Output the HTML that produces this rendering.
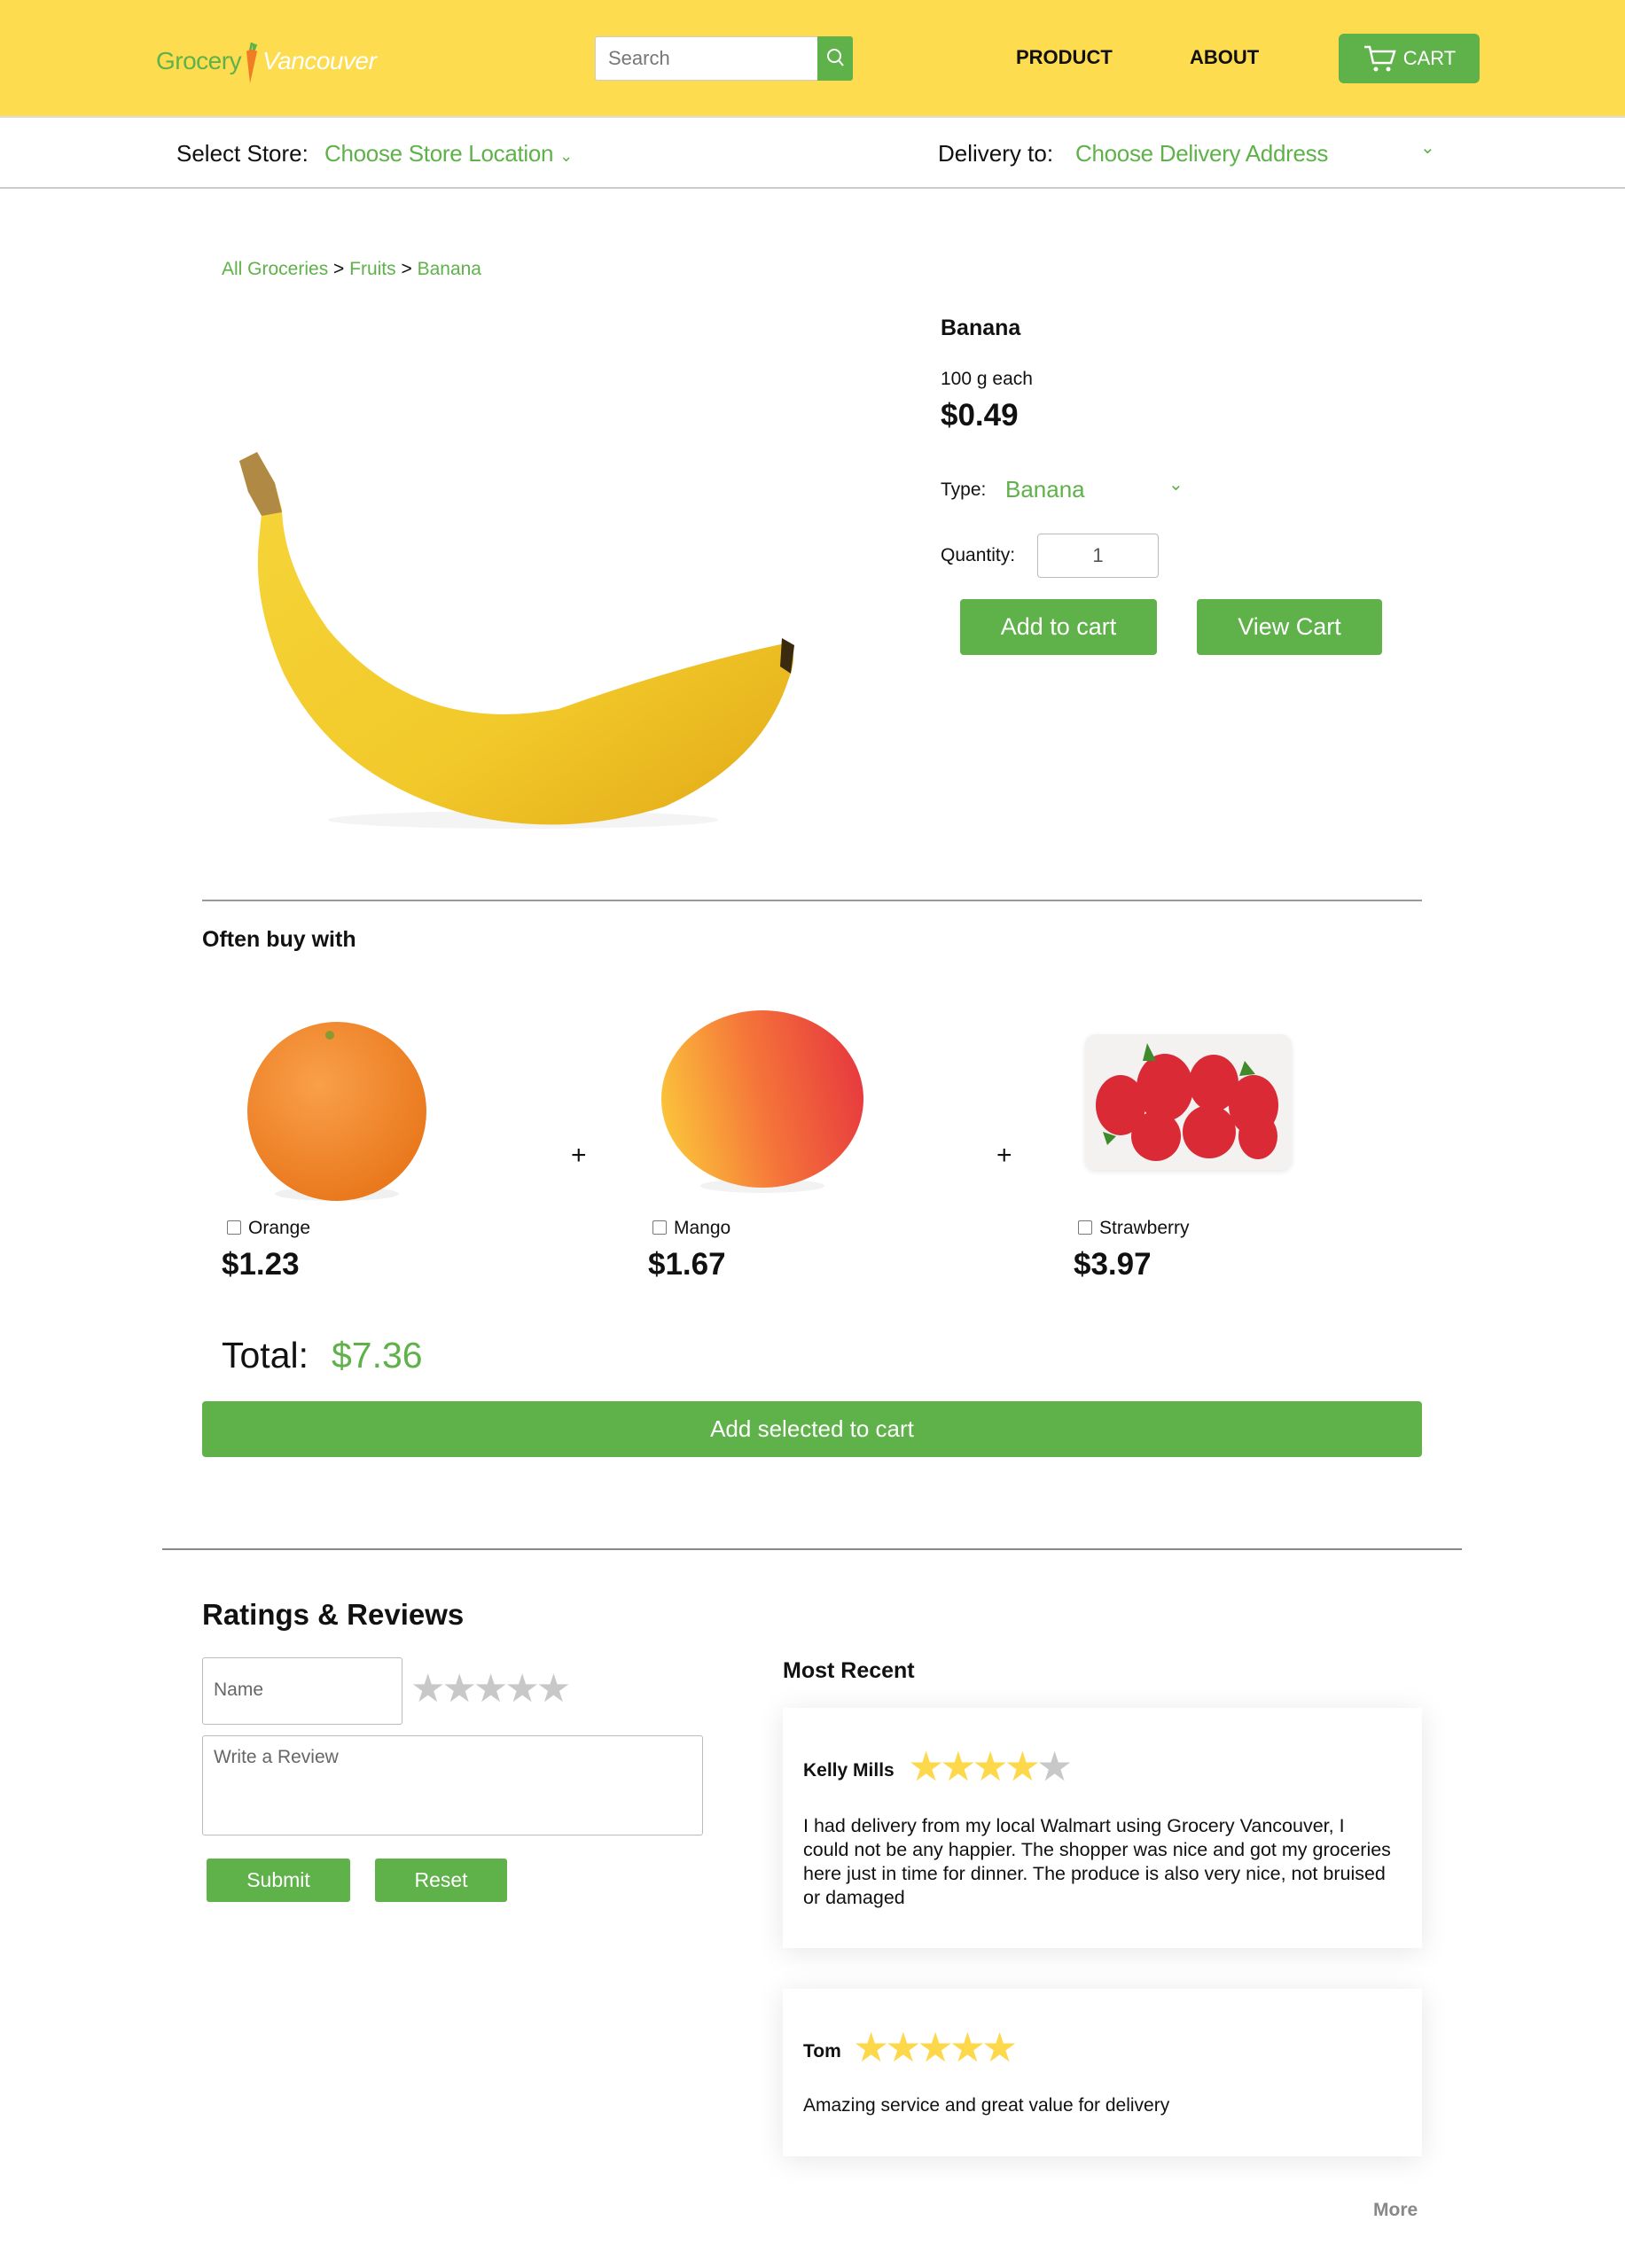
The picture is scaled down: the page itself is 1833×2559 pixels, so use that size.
<!DOCTYPE html>
<html><head><meta charset="utf-8"><style>
*{margin:0;padding:0;box-sizing:border-box}
body{width:1833px;height:2559px;position:relative;background:#fff;font-family:"Liberation Sans",sans-serif;color:#111;overflow:hidden}
.a{position:absolute;white-space:nowrap}
.g{color:#5fb14a}
.btn{position:absolute;background:#5fb14a;color:#fff;border-radius:4px;display:flex;align-items:center;justify-content:center}
.card{position:absolute;background:#fff;box-shadow:0 4px 30px rgba(0,0,0,0.1)}
.star{color:#fdd84a}
</style></head><body>
<div class="a" style="left:0;top:0;width:1833px;height:133px;background:#fedc4f;border-bottom:2px solid #ddd"></div>
<div class="a" style="left:176px;top:46px;font-size:28px;line-height:34px;letter-spacing:-0.5px"><span class="g">Grocery</span><svg width="24" height="50" viewBox="0 0 24 50" style="vertical-align:-18px"><path d="M12 2l-2 10M14 3l0 9M17 4l-3 8" stroke="#5fb14a" stroke-width="2.5"/><path d="M6 12 Q12 8 18 12 L10 48 Z" fill="#f07c24"/></svg><span style="color:#fff;font-style:italic">Vancouver</span></div>
<div class="a" style="left:671px;top:41px;width:252px;height:50px;background:#fff;border:1px solid #ccc;border-radius:3px 0 0 3px;font-size:22px;color:#777;padding:11px 14px">Search</div>
<div class="a" style="left:922px;top:41px;width:40px;height:50px;background:#5fb14a;border-radius:0 3px 3px 0">
<svg width="40" height="50" viewBox="0 0 40 50"><circle cx="19" cy="22" r="7" fill="none" stroke="#fff" stroke-width="2"/><line x1="24" y1="27" x2="29" y2="33" stroke="#fff" stroke-width="2"/></svg></div>
<div class="a" style="left:1146px;top:52px;font-size:22px;font-weight:bold">PRODUCT</div>
<div class="a" style="left:1342px;top:52px;font-size:22px;font-weight:bold">ABOUT</div>
<div class="btn" style="left:1510px;top:38px;width:159px;height:56px;border-radius:6px;font-size:22px">
<svg width="38" height="34" viewBox="0 0 38 34" style="margin-right:8px"><path d="M2 4h6l4 18h20l4-13H10" fill="none" stroke="#fff" stroke-width="2.5"/><circle cx="15" cy="29" r="2.5" fill="#fff"/><circle cx="29" cy="29" r="2.5" fill="#fff"/></svg>CART</div>

<div class="a" style="left:199px;top:158px;font-size:26px">Select Store:</div>
<div class="a g" style="left:366px;top:158px;font-size:26px;letter-spacing:-0.3px">Choose Store Location <span style="font-size:18px">&#x2304;</span></div>
<div class="a" style="left:1058px;top:158px;font-size:26px">Delivery to:</div>
<div class="a g" style="left:1213px;top:158px;font-size:26px;letter-spacing:-0.3px">Choose Delivery Address</div>
<div class="a g" style="left:1602px;top:154px;font-size:20px">&#x2304;</div>
<div class="a" style="left:0;top:211px;width:1833px;height:2px;background:#ccc"></div>

<div class="a" style="left:250px;top:292px;font-size:21px"><span class="g">All Groceries</span> &gt; <span class="g">Fruits</span> &gt; <span class="g">Banana</span></div>

<svg class="a" style="left:250px;top:500px" width="660" height="440" viewBox="0 0 660 440">
<defs><linearGradient id="bn" x1="0" y1="0" x2="1" y2="1"><stop offset="0" stop-color="#f6d63a"/><stop offset="0.6" stop-color="#f2c92a"/><stop offset="1" stop-color="#e2a918"/></linearGradient></defs>
<ellipse cx="340" cy="425" rx="220" ry="10" fill="#f4f4f4"/>
<path d="M20 20 L40 10 L60 45 L68 75 Q70 140 120 210 Q220 330 380 300 Q520 250 640 225 Q650 240 640 265 Q610 360 500 410 Q390 445 280 420 Q130 380 70 260 Q35 180 42 110 L45 80 L30 55Z" fill="url(#bn)"/>
<path d="M20 20 L40 10 L60 45 L68 78 L45 82 L30 55Z" fill="#b08a45"/>
<path d="M632 220 L646 228 L642 260 L630 252Z" fill="#3a2a10"/>
</svg>

<div class="a" style="left:1061px;top:356px;font-size:25px;font-weight:bold">Banana</div>
<div class="a" style="left:1061px;top:416px;font-size:21px">100 g each</div>
<div class="a" style="left:1061px;top:449px;font-size:35px;font-weight:bold">$0.49</div>
<div class="a" style="left:1061px;top:541px;font-size:21px">Type:</div>
<div class="a g" style="left:1134px;top:537px;font-size:26px">Banana</div>
<div class="a g" style="left:1318px;top:534px;font-size:20px">&#x2304;</div>
<div class="a" style="left:1061px;top:615px;font-size:21px">Quantity:</div>
<div class="a" style="left:1170px;top:602px;width:137px;height:50px;border:1px solid #bbb;border-radius:4px;font-size:22px;color:#555;text-align:center;line-height:48px">1</div>
<div class="btn" style="left:1083px;top:676px;width:222px;height:63px;font-size:27px">Add to cart</div>
<div class="btn" style="left:1350px;top:676px;width:209px;height:63px;font-size:27px">View Cart</div>

<div class="a" style="left:228px;top:1015px;width:1376px;height:2px;background:#999"></div>
<div class="a" style="left:228px;top:1046px;font-size:25px;font-weight:bold">Often buy with</div>

<svg class="a" style="left:270px;top:1150px" width="220" height="220"><defs><radialGradient id="or" cx="0.4" cy="0.35" r="0.7"><stop offset="0" stop-color="#f9a04a"/><stop offset="1" stop-color="#e9761a"/></radialGradient></defs><ellipse cx="110" cy="197" rx="70" ry="8" fill="#f0f0f0"/><circle cx="110" cy="104" r="101" fill="url(#or)"/><circle cx="102" cy="18" r="5" fill="#8a9a30"/></svg>
<svg class="a" style="left:740px;top:1138px" width="240" height="240"><defs><linearGradient id="mg" x1="0" y1="0.6" x2="1" y2="0.4"><stop offset="0" stop-color="#fbc43a"/><stop offset="0.5" stop-color="#f5743a"/><stop offset="1" stop-color="#e73a3e"/></linearGradient></defs><ellipse cx="120" cy="200" rx="70" ry="8" fill="#f2f2f2"/><ellipse cx="120" cy="102" rx="114" ry="100" fill="url(#mg)"/></svg>
<div class="a" style="left:1224px;top:1167px;width:233px;height:153px;background:#f4f1f1;border-radius:12px;box-shadow:0 2px 6px rgba(0,0,0,0.1)">
<svg width="233" height="153"><g fill="#d92a35"><ellipse cx="40" cy="80" rx="28" ry="34"/><ellipse cx="90" cy="60" rx="32" ry="38"/><ellipse cx="145" cy="55" rx="28" ry="32"/><ellipse cx="190" cy="80" rx="28" ry="34"/><ellipse cx="80" cy="115" rx="28" ry="28"/><ellipse cx="140" cy="110" rx="30" ry="30"/><ellipse cx="195" cy="115" rx="22" ry="26"/></g><g fill="#3f8a2a"><path d="M70 10l10 20-15 0z"/><path d="M180 30l12 15-18 2z"/><path d="M20 110l15 5-10 10z"/></g></svg></div>
<div class="a" style="left:644px;top:1287px;font-size:30px">+</div>
<div class="a" style="left:1124px;top:1287px;font-size:30px">+</div>

<div class="a" style="left:256px;top:1374px;font-size:21px"><span style="display:inline-block;width:16px;height:16px;border:1px solid #777;border-radius:2px;margin-right:8px;vertical-align:-1px"></span>Orange</div>
<div class="a" style="left:736px;top:1374px;font-size:21px"><span style="display:inline-block;width:16px;height:16px;border:1px solid #777;border-radius:2px;margin-right:8px;vertical-align:-1px"></span>Mango</div>
<div class="a" style="left:1216px;top:1374px;font-size:21px"><span style="display:inline-block;width:16px;height:16px;border:1px solid #777;border-radius:2px;margin-right:8px;vertical-align:-1px"></span>Strawberry</div>
<div class="a" style="left:250px;top:1407px;font-size:35px;font-weight:bold">$1.23</div>
<div class="a" style="left:731px;top:1407px;font-size:35px;font-weight:bold">$1.67</div>
<div class="a" style="left:1211px;top:1407px;font-size:35px;font-weight:bold">$3.97</div>
<div class="a" style="left:250px;top:1506px;font-size:41px">Total:<span class="g" style="margin-left:26px">$7.36</span></div>
<div class="btn" style="left:228px;top:1581px;width:1376px;height:63px;font-size:26px">Add selected to cart</div>

<div class="a" style="left:183px;top:1747px;width:1466px;height:2px;background:#888"></div>
<div class="a" style="left:228px;top:1803px;font-size:33px;font-weight:bold">Ratings &amp; Reviews</div>
<div class="a" style="left:228px;top:1870px;width:226px;height:76px;border:1px solid #bbb;border-radius:3px;font-size:21px;color:#666;padding:24px 12px">Name</div>
<div class="a" style="left:463px;top:1880px;font-size:44px;color:#c8c8c8;letter-spacing:-4px">★★★★★</div>
<div class="a" style="left:228px;top:1958px;width:565px;height:113px;border:1px solid #bbb;border-radius:3px;font-size:21px;color:#666;padding:12px 12px">Write a Review</div>
<div class="btn" style="left:233px;top:2097px;width:162px;height:49px;font-size:23px;border-radius:3px">Submit</div>
<div class="btn" style="left:423px;top:2097px;width:149px;height:49px;font-size:23px;border-radius:3px">Reset</div>

<div class="a" style="left:883px;top:1871px;font-size:25px;font-weight:bold">Most Recent</div>
<div class="card" style="left:883px;top:1927px;width:721px;height:271px"></div>
<div class="a" style="left:906px;top:1986px;font-size:21px;font-weight:bold">Kelly Mills</div>
<div class="a" style="left:1024px;top:1966px;font-size:46px;letter-spacing:-5px"><span class="star">★★★★</span><span style="color:#c8c8c8">★</span></div>
<div class="a" style="left:906px;top:2047px;font-size:21.5px;line-height:27px;white-space:normal;width:664px">I had delivery from my local Walmart using Grocery Vancouver, I could not be any happier. The shopper was nice and got my groceries here just in time for dinner. The produce is also very nice, not bruised or damaged</div>
<div class="card" style="left:883px;top:2244px;width:721px;height:189px"></div>
<div class="a" style="left:906px;top:2303px;font-size:21px;font-weight:bold">Tom</div>
<div class="a star" style="left:962px;top:2283px;font-size:46px;letter-spacing:-5px">★★★★★</div>
<div class="a" style="left:906px;top:2364px;font-size:21px">Amazing service and great value for delivery</div>
<div class="a" style="left:1549px;top:2482px;font-size:21px;color:#888;font-weight:bold">More</div>
</body></html>
